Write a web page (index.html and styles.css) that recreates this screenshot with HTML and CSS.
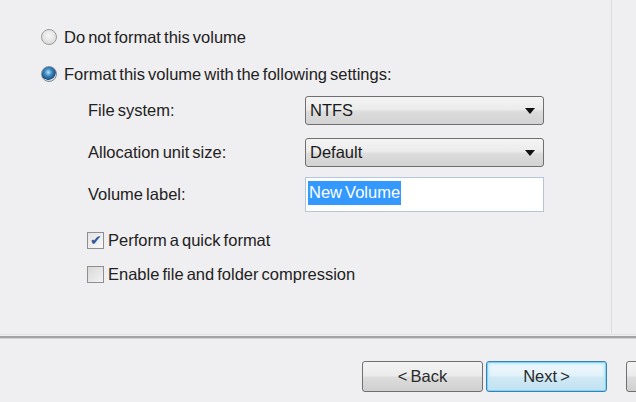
FILE: index.html
```
<!DOCTYPE html>
<html lang="en">

<head>
    <meta charset="UTF-8">
    <title>Format Partition</title>
    <link rel="stylesheet" href="styles.css">
</head>

<body>
    <div class="wizard">
        <div class="content">
            <label class="option">
                <span class="radio"></span>
                <span>Do not format this volume</span>
            </label>
            <label class="option option-second">
                <span class="radio radio-checked"></span>
                <span>Format this volume with the following settings:</span>
            </label>

            <div class="settings">
                <div class="setting-row row-fs">
                    <span class="setting-label">File system:</span>
                    <div class="select">
                        <span>NTFS</span>
                        <span class="arrow"></span>
                    </div>
                </div>
                <div class="setting-row row-alloc">
                    <span class="setting-label">Allocation unit size:</span>
                    <div class="select">
                        <span>Default</span>
                        <span class="arrow"></span>
                    </div>
                </div>
                <div class="setting-row row-label">
                    <span class="setting-label">Volume label:</span>
                    <div class="textbox">
                        <span class="selected-text">New Volume</span>
                    </div>
                </div>

                <div class="checks">
                    <label class="check-row">
                        <span class="checkbox checkbox-on">&#10004;</span>
                        <span>Perform a quick format</span>
                    </label>
                    <label class="check-row">
                        <span class="checkbox"></span>
                        <span>Enable file and folder compression</span>
                    </label>
                </div>
            </div>
        </div>

        <div class="separator"></div>

        <div class="footer">
            <button class="btn">&lt; Back</button>
            <button class="btn btn-default">Next &gt;</button>
            <!-- cancel button is cut off by the window edge -->
            <button class="btn btn-cancel" aria-label="Cancel"></button>
        </div>
    </div>
</body>

</html>
```

FILE: styles.css
```
body {
    margin: 0;
    padding: 0;
    background: #efeef0;
    font-family: 'Liberation Sans', Arial, sans-serif;
    font-size: 16.5px;
    word-spacing: -1.5px;
    color: #222;
    overflow: hidden;
}

.wizard {
    width: 636px;
    height: 402px;
    overflow: hidden;
}

.content {
    width: 612px;
    height: 334px;
    box-sizing: border-box;
    border-right: 1px solid #dcdbde;
    padding: 28px 0 0 41px;
}

.option {
    display: flex;
    align-items: center;
    gap: 7px;
    height: 18px;
}

.option-second {
    margin-top: 19px;
}

.radio {
    width: 14px;
    height: 14px;
    border-radius: 50%;
    border: 1px solid #9a9a9c;
    background: radial-gradient(circle at 50% 40%, #f6f6f6 0%, #dedede 70%, #cfcfcf 100%);
    box-sizing: content-box;
    flex: none;
}

.radio-checked {
    background: radial-gradient(circle at 45% 38%, #b8e2fb 0%, #3f8ec4 30%, #1d4f80 62%, #d6d6d6 66%, #e8e8e8 100%);
    border-color: #7d8d9c;
}

.settings {
    margin-left: 47px;
    margin-top: 13px;
}

.setting-row {
    display: flex;
    align-items: center;
}

.setting-label {
    width: 217px;
}

.row-alloc {
    margin-top: 13px;
}

.row-label {
    margin-top: 10px;
}

.select {
    width: 239px;
    height: 29px;
    box-sizing: border-box;
    border: 1px solid #6f6f71;
    border-radius: 3px;
    background: linear-gradient(#f4f4f4 0%, #ececec 45%, #dcdcdc 55%, #d2d2d2 100%);
    display: flex;
    align-items: center;
    justify-content: space-between;
    padding: 0 8px 0 4px;
    color: #1a1a1a;
}

.arrow {
    width: 0;
    height: 0;
    border-left: 5px solid transparent;
    border-right: 5px solid transparent;
    border-top: 6px solid #111;
}

.textbox {
    width: 239px;
    height: 35px;
    box-sizing: border-box;
    border: 1px solid #b4c6d9;
    background: #fff;
    padding: 3px 0 0 2px;
}

.selected-text {
    display: inline-block;
    background: #3399ff;
    color: #fff;
    padding: 2px 1px 3px;
}

.checks {
    margin-top: 20px;
    margin-left: -1px;
}

.check-row {
    display: flex;
    align-items: center;
    gap: 4px;
    height: 17px;
    margin-bottom: 17px;
}

.checkbox {
    width: 15px;
    height: 15px;
    border: 1px solid #8f8f91;
    background: linear-gradient(135deg, #d8d8d8 0%, #f2f2f2 100%);
    box-sizing: content-box;
    flex: none;
    font-size: 14px;
    line-height: 15px;
    text-align: center;
    color: #2f5597;
}

.checkbox-on {
    background: linear-gradient(135deg, #e4e4e4 0%, #f8f8f8 100%);
}

.separator {
    height: 5px;
    box-sizing: border-box;
    border-top: 1px solid #e3e2e5;
    border-bottom: 1px solid #d3d2d5;
    background: linear-gradient(#efeef0 0%, #efeef0 33%, #a2a2a4 34%, #a2a2a4 100%);
}

.footer {
    display: flex;
    gap: 3px;
    padding: 22px 0 0 362px;
    width: 400px;
}

.btn {
    width: 121px;
    height: 31px;
    flex: none;
    border: 1px solid #707072;
    border-radius: 3px;
    background: linear-gradient(#f3f3f3 0%, #ebebeb 48%, #dddddd 52%, #cfcfcf 100%);
    font-family: 'Liberation Sans', Arial, sans-serif;
    font-size: 16.5px;
    word-spacing: -1.5px;
    color: #2a2a2a;
    padding: 0;
}

.btn-default {
    border-color: #3c80b1;
    box-shadow: inset 0 0 0 1px #7fd3f5, inset 0 0 3px 2px #b8e8fb;
    background: linear-gradient(#f0f8fc 0%, #e2f2fa 48%, #d0e9f5 52%, #c3e1f0 100%);
}

.btn-cancel {
    margin-left: 16px;
}
```
